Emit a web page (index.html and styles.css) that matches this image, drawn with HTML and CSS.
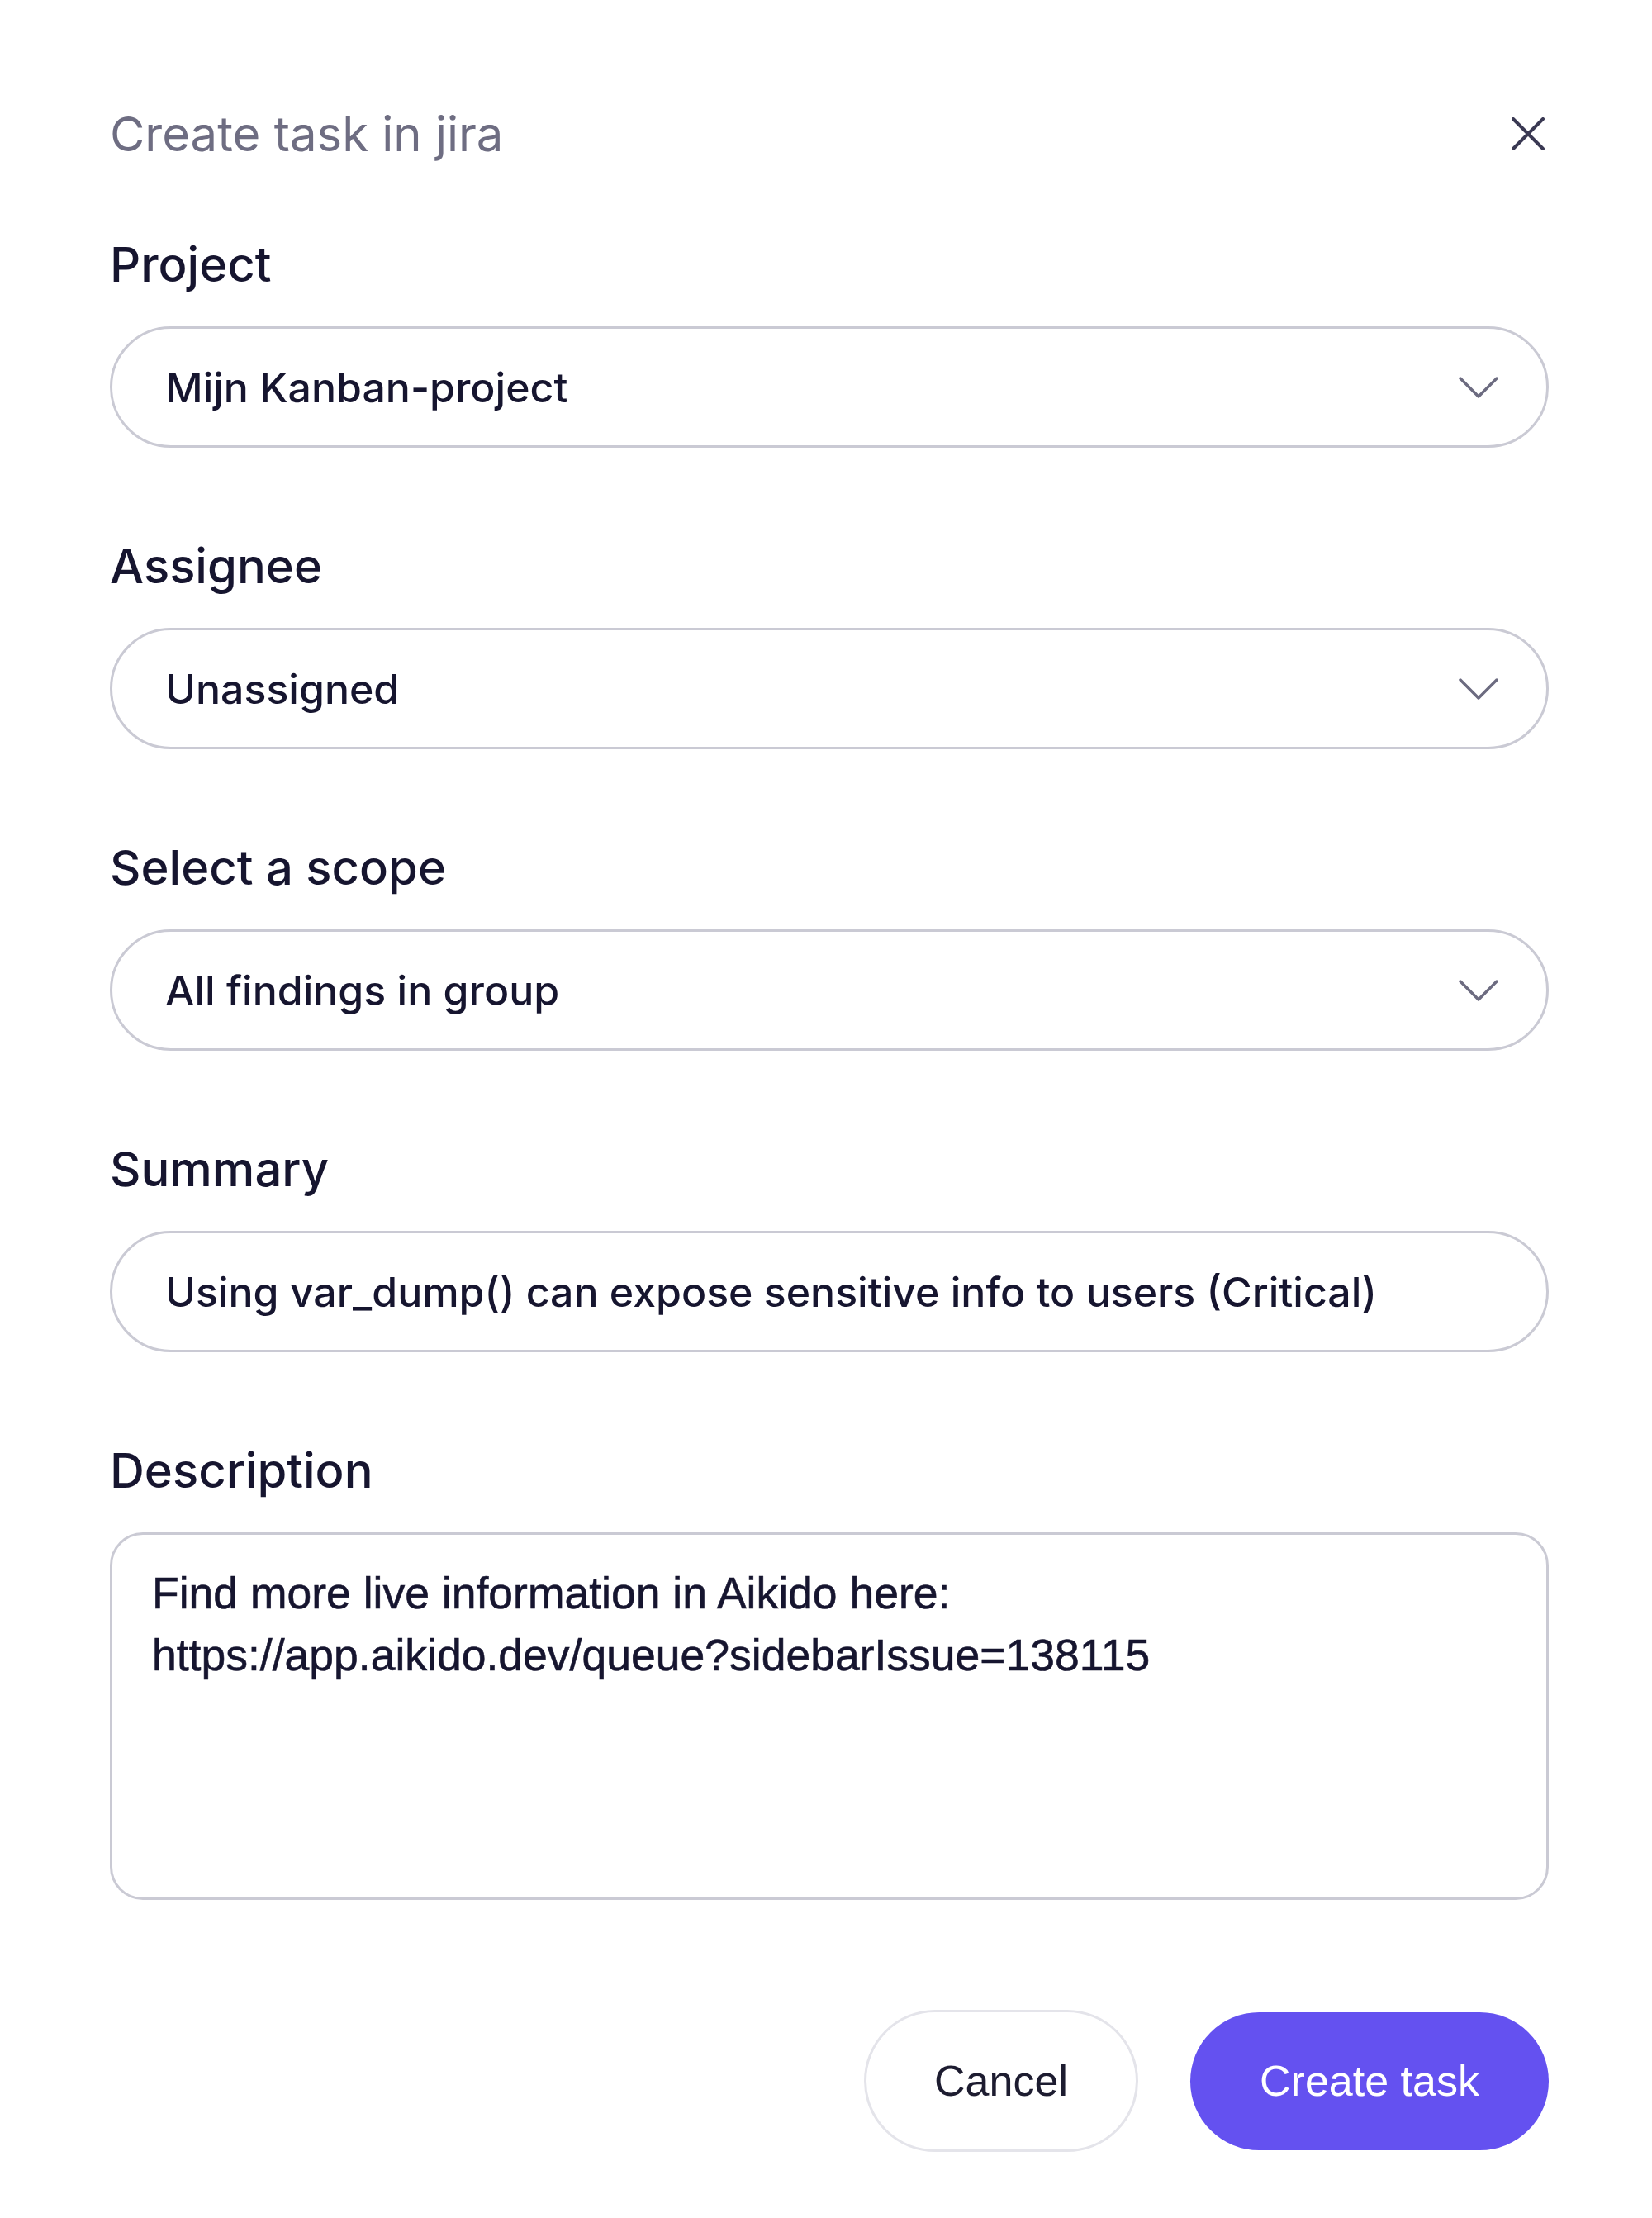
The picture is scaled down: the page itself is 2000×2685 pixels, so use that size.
FILE: index.html
```html
<!DOCTYPE html>
<html lang="en">
<head>
    <meta charset="UTF-8">
    <meta name="viewport" content="width=device-width, initial-scale=1.0">
    <title>Create task in jira</title>
    <link rel="stylesheet" href="styles.css">
</head>
<body>
    <div class="modal">
        <div class="modal-header">
            <h1 class="modal-title">Create task in jira</h1>
            <button class="close-button" aria-label="Close">
                <svg width="40" height="40" viewBox="0 0 40 40" fill="none">
                    <path d="M2 2 L38 38 M38 2 L2 38" stroke="#3a3953" stroke-width="4" stroke-linecap="round"/>
                </svg>
            </button>
        </div>

        <div class="form">
            <div class="field">
                <label class="field-label">Project</label>
                <div class="select">
                    <span>Mijn Kanban-project</span>
                    <svg class="chevron" width="48" height="28" viewBox="0 0 48 28" fill="none">
                        <path d="M2 3 L24 25 L46 3" stroke="#6c6b80" stroke-width="3.5" stroke-linecap="round" stroke-linejoin="round"/>
                    </svg>
                </div>
            </div>

            <div class="field">
                <label class="field-label">Assignee</label>
                <div class="select">
                    <span>Unassigned</span>
                    <svg class="chevron" width="48" height="28" viewBox="0 0 48 28" fill="none">
                        <path d="M2 3 L24 25 L46 3" stroke="#6c6b80" stroke-width="3.5" stroke-linecap="round" stroke-linejoin="round"/>
                    </svg>
                </div>
            </div>

            <div class="field">
                <label class="field-label">Select a scope</label>
                <div class="select">
                    <span>All findings in group</span>
                    <svg class="chevron" width="48" height="28" viewBox="0 0 48 28" fill="none">
                        <path d="M2 3 L24 25 L46 3" stroke="#6c6b80" stroke-width="3.5" stroke-linecap="round" stroke-linejoin="round"/>
                    </svg>
                </div>
            </div>

            <div class="field">
                <label class="field-label">Summary</label>
                <div class="select">
                    <span>Using var_dump() can expose sensitive info to users (Critical)</span>
                </div>
            </div>

            <div class="field">
                <label class="field-label">Description</label>
                <div class="textarea">Find more live information in Aikido here:<br>https://app.aikido.dev/queue?sidebarIssue=138115</div>
            </div>
        </div>

        <div class="actions">
            <button class="btn btn-cancel">Cancel</button>
            <button class="btn btn-primary">Create task</button>
        </div>
    </div>
</body>
</html>
```

FILE: styles.css
```css
:root {
    --text-dark: #16152f;
    --text-muted: #6e6d82;
    --border: #cacad4;
    --purple: #6451f0;
}

* {
    margin: 0;
    padding: 0;
    box-sizing: border-box;
}

body {
    font-family: Inter, 'Noto Sans', sans-serif;
    background: #ffffff;
    color: var(--text-dark);
}

.modal {
    width: 2000px;
    padding: 128px 125px 0 133px;
}

.modal-header {
    display: flex;
    justify-content: space-between;
    align-items: center;
    margin-bottom: 90px;
}

.modal-title {
    font-size: 58px;
    line-height: 68px;
    font-weight: 400;
    color: var(--text-muted);
}

.close-button {
    border: none;
    background: none;
    width: 40px;
    height: 40px;
    margin-right: 5px;
    display: flex;
}

.form {
    display: flex;
    flex-direction: column;
    gap: 109px;
}

.field {
    display: flex;
    flex-direction: column;
    gap: 41px;
}

.field-label {
    font-size: 58px;
    line-height: 68px;
    font-weight: 500;
    color: var(--text-dark);
}

.select {
    height: 147px;
    border: 3px solid var(--border);
    border-radius: 74px;
    padding: 0 58px 0 64px;
    display: flex;
    align-items: center;
    justify-content: space-between;
    font-size: 50px;
    font-weight: 500;
    color: var(--text-dark);
}

.chevron {
    flex-shrink: 0;
}

.textarea {
    height: 445px;
    border: 3px solid var(--border);
    border-radius: 40px;
    padding: 33px 48px;
    font-family: 'Liberation Sans', Arial, sans-serif;
    font-size: 53.5px;
    line-height: 75px;
    color: var(--text-dark);
    -webkit-text-stroke: 0.6px var(--text-dark);
}

.actions {
    display: flex;
    justify-content: flex-end;
    align-items: center;
    gap: 63px;
    margin-top: 133px;
}

.btn {
    font-family: 'Liberation Sans', Arial, sans-serif;
    font-size: 52px;
    border-radius: 90px;
    cursor: pointer;
}

.btn-cancel {
    width: 332px;
    height: 172px;
    background: #ffffff;
    border: 3px solid #e4e4ea;
    color: #1d1c30;
}

.btn-primary {
    width: 434px;
    height: 167px;
    background: var(--purple);
    border: none;
    color: #ffffff;
}
```
